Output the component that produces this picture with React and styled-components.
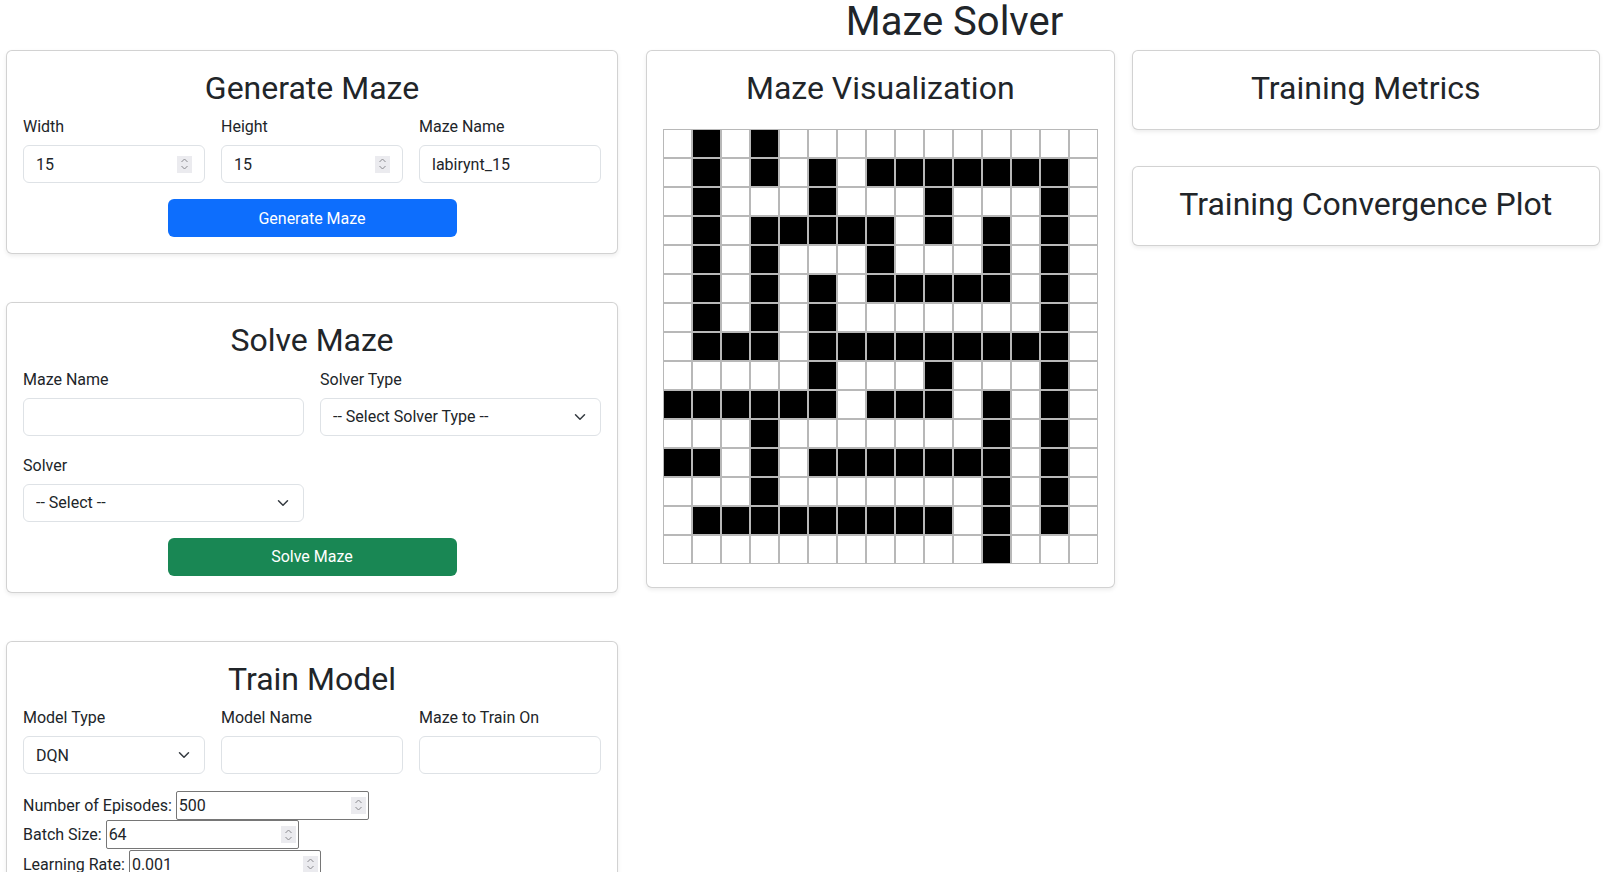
import React from "react";
import styled, { createGlobalStyle } from "styled-components";

const GlobalStyle = createGlobalStyle`
  *, *::before, *::after { box-sizing: border-box; }
  body {
    margin: 0;
    background: #fff;
    color: #212529;
    font-family: "Segoe UI", Roboto, "Liberation Sans", sans-serif;
    font-size: 16px;
  }
`;

const MAZE = [
  ".#.#...........",
  ".#.#.#.#######.",
  ".#...#...#...#.",
  ".#.#####.#.#.#.",
  ".#.#...#...#.#.",
  ".#.#.#.#####.#.",
  ".#.#.#.......#.",
  ".###.#########.",
  ".....#...#...#.",
  "######.###.#.#.",
  "...#.......#.#.",
  "##.#.#######.#.",
  "...#.......#.#.",
  ".#########.#.#.",
  "...........#...",
];

const Page = styled.div`
  width: 1603px;
`;

const Header = styled.h1`
  margin: 0;
  padding: 2px 0 0 306px;
  height: 50px;
  font-size: 40px;
  font-weight: 400;
  line-height: 40px;
  text-align: center;
`;

const Columns = styled.div`
  display: flex;
  align-items: flex-start;
  padding-left: 6px;
`;

const Column = styled.div`
  display: flex;
  flex-direction: column;
  width: ${(p) => p.$width}px;
  margin-left: ${(p) => p.$offset || 0}px;
  gap: ${(p) => p.$gap || 0}px;
`;

const Card = styled.section`
  border: 1px solid rgba(0, 0, 0, 0.175);
  border-radius: 6px;
  box-shadow: 0 2px 4px rgba(0, 0, 0, 0.075);
  padding: 16px;
  background: #fff;
`;

const CardTitle = styled.h2`
  margin: 0 0 8px;
  padding-top: 5px;
  font-size: 32px;
  font-weight: 400;
  line-height: 33.4px;
  text-align: center;
`;

const FieldGrid = styled.div`
  display: grid;
  grid-template-columns: repeat(${(p) => p.$cols}, minmax(0, 1fr));
  gap: 16px;
`;

const Field = styled.div`
  display: flex;
  flex-direction: column;
  min-width: 0;
`;

const Label = styled.label`
  padding-top: 3px;
  line-height: 21px;
  margin-bottom: 8px;
`;

const Shell = styled.div`
  display: flex;
  align-items: center;
  height: 38px;
  padding: 0 12px;
  border: 1px solid #dee2e6;
  border-radius: 6px;
  background: #fff;
`;

const BareInput = styled.input`
  flex: 1;
  min-width: 0;
  border: none;
  outline: none;
  padding: 0;
  font: inherit;
  color: #212529;
  background: transparent;
`;

const BareSelect = styled.select`
  flex: 1;
  min-width: 0;
  border: none;
  outline: none;
  padding: 0;
  font: inherit;
  color: #212529;
  background: transparent;
  appearance: none;
`;

const SpinBox = styled.span`
  display: flex;
  flex-direction: column;
  align-items: center;
  justify-content: center;
  width: 15px;
  height: 17px;
  background: #ebebef;
  flex-shrink: 0;
`;

const ActionButton = styled.button`
  display: block;
  width: 50%;
  height: 38px;
  margin: 16px auto 0;
  border: none;
  border-radius: 6px;
  background: ${(p) => p.$bg};
  color: #fff;
  font: inherit;
`;

const ParamList = styled.div`
  margin-top: 16px;
`;

const ParamRow = styled.div`
  display: flex;
  align-items: center;
  gap: 4px;
  height: 29.7px;
`;

const PlainShell = styled.div`
  display: flex;
  align-items: center;
  width: ${(p) => p.$width}px;
  height: 29px;
  padding: 0 2px;
  border: 1px solid #767676;
  border-radius: 2px;
`;

const MazeBoard = styled.div`
  display: grid;
  grid-template-columns: repeat(15, minmax(0, 1fr));
  margin: 24px 0 7px;
`;

const Cell = styled.div`
  aspect-ratio: 1;
  border: 1px solid #b8b8b8;
  background: ${(p) => (p.$wall ? "#000" : "#fff")};
`;

const Spinner = () => (
  <SpinBox>
    <svg width="9" height="14" viewBox="0 0 9 14">
      <path d="M1.5 5 4.5 2 7.5 5" fill="none" stroke="#8a8a8f" strokeWidth="1" />
      <path d="M1.5 9 4.5 12 7.5 9" fill="none" stroke="#8a8a8f" strokeWidth="1" />
    </svg>
  </SpinBox>
);

const Chevron = () => (
  <svg width="16" height="12" viewBox="0 0 16 16" style={{ flexShrink: 0 }}>
    <path
      d="m2 5 6 6 6-6"
      fill="none"
      stroke="#343a40"
      strokeWidth="2"
      strokeLinecap="round"
      strokeLinejoin="round"
    />
  </svg>
);

const TextField = ({ label, value = "" }) => (
  <Field>
    <Label>{label}</Label>
    <Shell>
      <BareInput defaultValue={value} />
    </Shell>
  </Field>
);

const NumberField = ({ label, value }) => (
  <Field>
    <Label>{label}</Label>
    <Shell>
      <BareInput defaultValue={value} />
      <Spinner />
    </Shell>
  </Field>
);

const SelectField = ({ label, options }) => (
  <Field>
    <Label>{label}</Label>
    <Shell>
      <BareSelect>
        {options.map((o) => (
          <option key={o}>{o}</option>
        ))}
      </BareSelect>
      <Chevron />
    </Shell>
  </Field>
);

const ParamField = ({ label, value, width }) => (
  <ParamRow>
    <span>{label}</span>
    <PlainShell $width={width}>
      <BareInput defaultValue={value} />
      <Spinner />
    </PlainShell>
  </ParamRow>
);

export default function App() {
  return (
    <>
      <GlobalStyle />
      <Page>
        <Header>Maze Solver</Header>
        <Columns>
          <Column $width={612} $gap={48}>
            <Card>
              <CardTitle>Generate Maze</CardTitle>
              <FieldGrid $cols={3}>
                <NumberField label="Width" value="15" />
                <NumberField label="Height" value="15" />
                <TextField label="Maze Name" value="labirynt_15" />
              </FieldGrid>
              <ActionButton $bg="#0d6efd">Generate Maze</ActionButton>
            </Card>

            <Card>
              <CardTitle>Solve Maze</CardTitle>
              <FieldGrid $cols={2}>
                <TextField label="Maze Name" />
                <SelectField
                  label="Solver Type"
                  options={["-- Select Solver Type --"]}
                />
                <SelectField label="Solver" options={["-- Select --"]} />
              </FieldGrid>
              <ActionButton $bg="#198754">Solve Maze</ActionButton>
            </Card>

            <Card>
              <CardTitle>Train Model</CardTitle>
              <FieldGrid $cols={3}>
                <SelectField label="Model Type" options={["DQN"]} />
                <TextField label="Model Name" />
                <TextField label="Maze to Train On" />
              </FieldGrid>
              <ParamList>
                <ParamField label="Number of Episodes:" value="500" width={193} />
                <ParamField label="Batch Size:" value="64" width={193} />
                <ParamField label="Learning Rate:" value="0.001" width={192} />
              </ParamList>
            </Card>
          </Column>

          <Column $width={468.5} $offset={28}>
            <Card>
              <CardTitle>Maze Visualization</CardTitle>
              <MazeBoard>
                {MAZE.map((row, r) =>
                  row
                    .split("")
                    .map((c, i) => <Cell key={`${r}-${i}`} $wall={c === "#"} />)
                )}
              </MazeBoard>
            </Card>
          </Column>

          <Column $width={468.5} $offset={17} $gap={35.5}>
            <Card>
              <CardTitle>Training Metrics</CardTitle>
            </Card>
            <Card>
              <CardTitle>Training Convergence Plot</CardTitle>
            </Card>
          </Column>
        </Columns>
      </Page>
    </>
  );
}
